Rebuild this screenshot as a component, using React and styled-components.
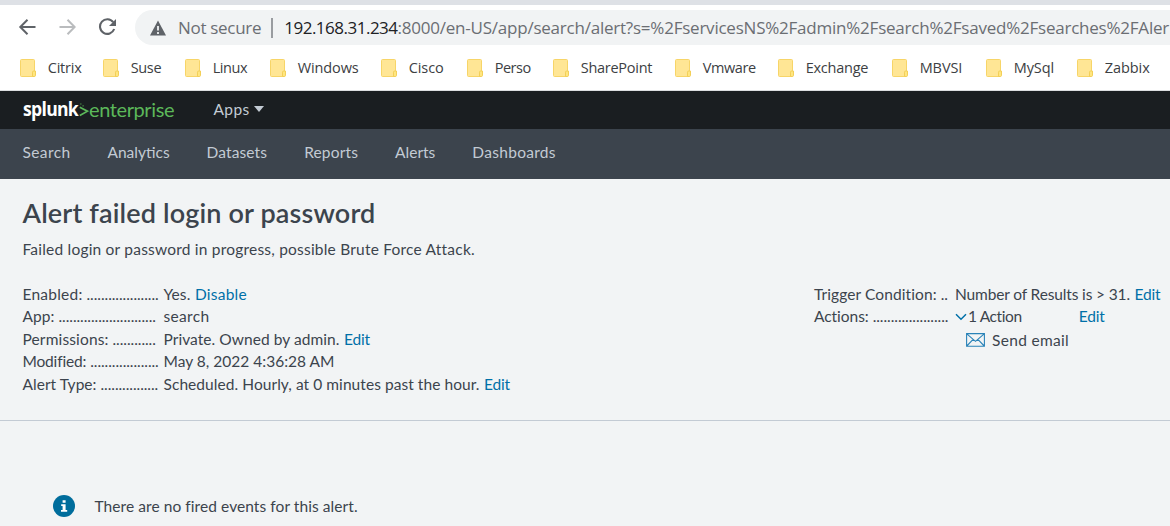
import React from "react";
import styled, { createGlobalStyle } from "styled-components";

const Global = createGlobalStyle`
  * { box-sizing: border-box; }
  body {
    margin: 0;
    background: #f2f4f5;
    color: #3c444d;
    font: 400 15.5px Lato, "Liberation Sans", sans-serif;
    overflow: hidden;
  }
`;

const Page = styled.div`
  width: 1170px;
  height: 526px;
  overflow: hidden;
  white-space: pre;
`;

const Text = styled.span`
  letter-spacing: ${(p) => p.$ls || 0}px;
`;

/* Browser chrome */
const Browser = styled.header`
  height: 91px;
  background: #fff;
  border-top: 5px solid #dee1e6;
  border-bottom: 1px solid #dcdee0;
  font-family: "Open Sans", "Noto Sans", sans-serif;
`;

const Toolbar = styled.div`
  display: flex;
  align-items: center;
  height: 45px;
  padding-left: 18px;
`;

const ToolIcon = styled.svg`
  flex: none;
  width: 18px;
  height: 18px;
  margin-right: ${(p) => p.$gap}px;
  margin-bottom: 1px;
`;

const AddressBar = styled.div`
  display: flex;
  align-items: center;
  width: 1060px;
  flex: none;
  height: 35px;
  padding-left: 14px;
  border-radius: 18px 0 0 18px;
  background: #f1f3f4;
  color: #6b6e73;
  font-size: 17px;
  line-height: 35px;
`;

const WarningIcon = styled.svg`
  flex: none;
  width: 18px;
  height: 18px;
  margin-right: 11px;
`;

const Divider = styled.i`
  flex: none;
  width: 2px;
  height: 20px;
  margin: 0 11px 0 10px;
  background: #999ca0;
`;

const Host = styled(Text)`
  color: #202124;
`;

const Bookmarks = styled.nav`
  display: flex;
  align-items: center;
  height: 36px;
  padding-left: 20px;
  color: #3c4043;
  font-size: 14.5px;
`;

const Bookmark = styled.a`
  display: flex;
  flex: none;
  align-items: center;
  gap: 11.7px;
  width: ${(p) => p.$w}px;
  line-height: 18px;
`;

const FolderIcon = styled.svg`
  flex: none;
  width: 16px;
  height: 18px;
`;

/* Splunk bars */
const AppBar = styled.div`
  display: flex;
  align-items: center;
  height: 38px;
  padding-left: 23px;
  background: #1a1e21;
`;

const Logo = styled.div`
  display: flex;
  align-items: center;
  width: 190.5px;
  padding-bottom: 2px;
  font-size: 20px;
  line-height: 36px;
`;

const Brand = styled.b`
  width: 56px;
  color: #fff;
  font: 700 20px/36px "Open Sans", sans-serif;
  letter-spacing: -0.8px;
  transform: scaleX(0.88);
  transform-origin: 0 50%;
`;

const BrandMark = styled.svg`
  flex: none;
  width: 10px;
  height: 14px;
  margin-top: 2px;
`;

const Product = styled(Text)`
  color: #5cb85a;
`;

const MenuButton = styled.span`
  display: flex;
  align-items: center;
  gap: 4.5px;
  padding-bottom: 3px;
  color: #c3cbd4;
`;

const Caret = styled.i`
  border: 5px solid transparent;
  border-top: 6px solid #c3cbd4;
  border-bottom: 0;
`;

const NavBar = styled.nav`
  display: flex;
  align-items: center;
  gap: 37px;
  height: 50px;
  padding: 0 0 4px 22.5px;
  background: #3c444d;
  color: #c3cbd4;
`;

/* Alert page */
const Summary = styled.section`
  height: 242px;
  padding: 17px 0 0 22.5px;
  border-bottom: 1px solid #c3cbd4;
`;

const Title = styled.h1`
  margin: 0;
  font-size: 27px;
  font-weight: 600;
  line-height: 34px;
  letter-spacing: 0.15px;
`;

const Description = styled.p`
  margin: 9px 0 0;
  line-height: 20px;
  letter-spacing: 0.21px;
`;

const Columns = styled.div`
  display: flex;
  margin-top: 23.75px;
`;

const Column = styled.div`
  width: ${(p) => p.$w}px;
  flex: none;
`;

const Row = styled.div`
  display: flex;
  height: 22.5px;
  line-height: 22.5px;
`;

const Label = styled.span`
  flex: none;
  width: 141px;
`;

const Link = styled.a`
  color: #0070a8;
  letter-spacing: ${(p) => p.$ls ?? -0.15}px;
  margin-left: ${(p) => p.$gap ?? 4.5}px;
`;

const Chevron = styled.svg`
  width: 12px;
  height: 8px;
  margin: 8px 1px 0 0;
`;

const EmailAction = styled.div`
  display: flex;
  align-items: center;
  gap: 7px;
  height: 23.5px;
  padding-left: 152px;
`;

const MailIcon = styled.svg`
  width: 19px;
  height: 14px;
`;

const Message = styled.div`
  display: flex;
  align-items: center;
  gap: 19.5px;
  height: 24px;
  margin: 73px 0 0 53px;
`;

const InfoIcon = styled.svg`
  width: 22px;
  height: 22px;
`;

const bookmarks = [
  ["Citrix", 83, -0.19], ["Suse", 82, -0.35], ["Linux", 85, -0.42],
  ["Windows", 111, -0.1], ["Cisco", 86, -0.08], ["Perso", 86, -0.5],
  ["SharePoint", 122, -0.26], ["Vmware", 103, -0.4], ["Exchange", 114, -0.24],
  ["MBVSI", 94, -0.11], ["MySql", 91, -0.06], ["Zabbix", 90, -0.06],
];

const sections = [
  ["Search", 0.39], ["Analytics", 0], ["Datasets", 0.12], ["Reports", 0.17],
  ["Alerts", 0], ["Dashboards", 0.3],
];

const details = [
  { label: "Enabled:", ls: 0.23, dots: 20, value: "Yes.", vls: 0.1, link: "Disable", lls: 0.24 },
  { label: "App:", ls: 0.07, dots: 27, value: "search", vls: 0.33 },
  { label: "Permissions:", ls: 0.14, dots: 12, value: "Private. Owned by admin.", vls: 0.06, link: "Edit" },
  { label: "Modified:", ls: -0.17, dots: 19, value: "May 8, 2022 4:36:28 AM", vls: 0.01 },
  { label: "Alert Type:", ls: 0.04, dots: 16, value: "Scheduled. Hourly, at 0 minutes past the hour.", vls: 0.06, link: "Edit" },
];

function Term({ label, ls, dots }) {
  return (
    <Label>
      <Text $ls={ls}>{label}</Text> <Text $ls={-0.05}>{".".repeat(dots)}</Text>
    </Label>
  );
}

export default function App() {
  return (
    <Page>
      <Global />
      <Browser>
        <Toolbar>
          <ToolIcon $gap={22} viewBox="0 0 18 18" fill="none" stroke="#5f6368" strokeWidth="2">
            <path d="M17.5 9H3M9.5 1.8L2.3 9l7.2 7.2" />
          </ToolIcon>
          <ToolIcon $gap={22} viewBox="0 0 18 18" fill="none" stroke="#babcbe" strokeWidth="2">
            <path d="M1.5 9H16M9.5 1.8L16.7 9l-7.2 7.2" />
          </ToolIcon>
          <ToolIcon $gap={19} viewBox="0 0 18 18" fill="none" stroke="#5f6368" strokeWidth="2.1">
            <path d="M15.2 4.2A7.3 7.3 0 1 0 16.2 11" />
            <path d="M18 1v7h-7z" fill="#5f6368" stroke="none" />
          </ToolIcon>
          <AddressBar>
            <WarningIcon viewBox="0 0 18 18">
              <path d="M9 1.5L17 16.5H1z" fill="#5f6368" />
              <path d="M9 7v4.5M9 13v2" stroke="#f1f3f4" strokeWidth="1.8" />
            </WarningIcon>
            <Text $ls={-0.3}>Not secure</Text>
            <Divider />
            <Host $ls={-0.5}>192.168.31.234</Host>
            <Text $ls={-0.225}>:8000/en-US/app/search/alert?s=%2FservicesNS%2Fadmin%2Fsearch%2Fsaved%2Fsearches%2FAler</Text>
          </AddressBar>
        </Toolbar>
        <Bookmarks>
          {bookmarks.map(([name, w, ls]) => (
            <Bookmark key={name} $w={w}>
              <FolderIcon viewBox="0 0 16 18">
                <rect x=".5" y=".5" width="14" height="17" rx="1" fill="#ffe695" stroke="#f7d568" />
                <path d="M12.5 17.5v-4.3q0-1.2 1.2-1.2h1.8v4.3q0 1.2-1.2 1.2z" fill="#ffe680" stroke="#f3cf58" />
              </FolderIcon>
              <Text $ls={ls}>{name}</Text>
            </Bookmark>
          ))}
        </Bookmarks>
      </Browser>

      <AppBar>
        <Logo>
          <Brand>splunk</Brand>
          <BrandMark viewBox="0 0 10 14" fill="none" stroke="#5cb85a">
            <path d="M.8 4.2l7.6 4L.8 12.4" strokeWidth="1.7" />
            <path d="M1 1h1.6M3.4 2.8h1.4" strokeWidth="1.2" opacity=".7" />
          </BrandMark>
          <Product $ls={-0.4}>enterprise</Product>
        </Logo>
        <MenuButton><Text $ls={0.37}>Apps</Text><Caret /></MenuButton>
      </AppBar>
      <NavBar>
        {sections.map(([name, ls]) => <Text key={name} $ls={ls}>{name}</Text>)}
      </NavBar>

      <Summary>
        <Title>Alert failed login or password</Title>
        <Description>Failed login or password in progress, possible Brute Force Attack.</Description>
        <Columns>
          <Column $w={791.5}>
            {details.map((d) => (
              <Row key={d.label}>
                <Term {...d} />
                <Text $ls={d.vls}>{d.value}</Text>
                {d.link && <Link $ls={d.lls}>{d.link}</Link>}
              </Row>
            ))}
          </Column>
          <Column $w={356}>
            <Row>
              <Term label="Trigger Condition:" ls={0.1} dots={2} />
              <Text $ls={-0.14}>Number of Results is &gt; 31.</Text>
              <Link>Edit</Link>
            </Row>
            <Row>
              <Term label="Actions:" ls={-0.04} dots={21} />
              <Chevron viewBox="0 0 12 8" fill="none" stroke="#0070a8" strokeWidth="1.5">
                <path d="M1 1.2l5 5 5-5" />
              </Chevron>
              <Text $ls={-0.39}>1 Action</Text>
              <Link $gap={57}>Edit</Link>
            </Row>
            <EmailAction>
              <MailIcon viewBox="0 0 19 14" fill="none" stroke="#2a83b8" strokeWidth="1.1">
                <path d="M.6.6h17.8v12.6H.6zM.8.9l8.7 7.4L18.2.9M.8 13l6.3-6.6M18.2 13l-6.3-6.6" />
              </MailIcon>
              <Text $ls={0.31}>Send email</Text>
            </EmailAction>
          </Column>
        </Columns>
      </Summary>

      <Message>
        <InfoIcon viewBox="0 0 22 22">
          <circle cx="11" cy="11" r="11" fill="#006d9c" />
          <path d="M9.6 5.2h3v2.6h-3zM8.2 9.3h4.4v5.6h1.6v1.8H8v-1.8h1.6v-3.8H8.2z" fill="#fff" />
        </InfoIcon>
        <Text $ls={0.07}>There are no fired events for this alert.</Text>
      </Message>
    </Page>
  );
}
